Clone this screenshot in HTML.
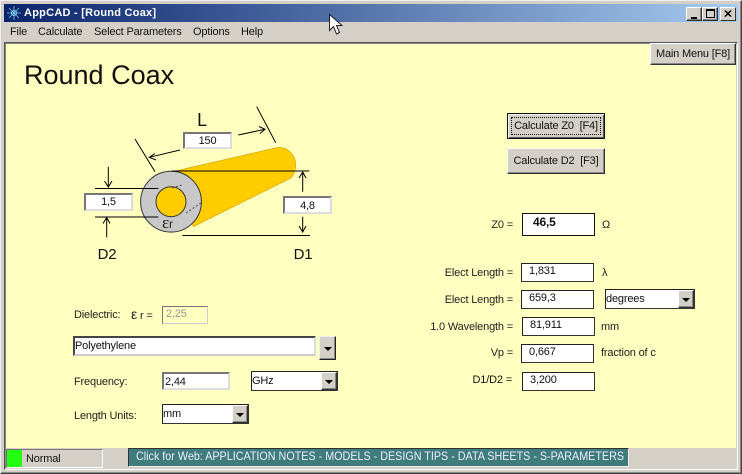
<!DOCTYPE html>
<html><head><meta charset="utf-8">
<style>
html,body{margin:0;padding:0;width:742px;height:474px;overflow:hidden;background:#d4d0c8;font-family:"Liberation Sans",sans-serif;font-size:11px;color:#111;letter-spacing:-.17px}
.a{position:absolute;box-sizing:border-box;white-space:nowrap}
.box{background:#fff;border:1px solid #222;border-right-color:#333;border-bottom-color:#333}
.sunk{background:#fff;border:2px solid;border-color:#777 #ddd #ddd #777}
.btn3{background:#d4d0c8;border:1px solid;border-color:#fff #333 #333 #fff;box-shadow:inset -1px -1px 0 #888}
.lab{color:#222}
.r{text-align:right}
.c{text-align:center}
.tri{position:absolute;left:50%;top:50%;margin:-1px 0 0 -4px;width:0;height:0;border:4px solid transparent;border-top:4px solid #000;border-bottom:0}
</style></head><body>
<!-- frame -->
<div class="a" style="left:0;top:0;width:742px;height:474px;border:1px solid #eee;border-right-color:#444;border-bottom-color:#444;box-shadow:inset -1px -1px 0 #888"></div>
<!-- title -->
<div class="a" style="left:4px;top:4px;width:734px;height:18px;background:linear-gradient(90deg,#0a246a,#a6caf0)"></div>
<svg class="a" style="left:6px;top:5px" width="16" height="16" viewBox="0 0 16 16" stroke="#6cc8f0" stroke-width=".8" fill="none"><path d="M8 1V15M1 8H15M3 3L13 13M13 3L3 13"/><circle cx="8" cy="8" r="2.5" stroke="#a8e4ff"/></svg>
<div class="a" style="left:24px;top:5px;color:#fff;font-weight:bold;font-size:11px;line-height:16px;letter-spacing:.25px">AppCAD - [Round Coax]</div>
<div class="a btn3 c" style="left:686px;top:7px;width:16px;height:14px"><div class="a" style="left:4px;top:9px;width:6px;height:2px;background:#000"></div></div>
<div class="a btn3" style="left:702px;top:7px;width:16px;height:14px"><div class="a" style="left:3px;top:1px;width:9px;height:9px;border:1px solid #000;border-top-width:2px"></div></div>
<svg class="a" style="left:720px;top:7px;background:#d4d0c8;border:1px solid;border-color:#fff #333 #333 #fff" width="16" height="14" viewBox="0 0 16 14"><path d="M4 3L11 10M5 3L12 10M11 3L4 10M12 3L5 10" stroke="#000"/></svg>
<!-- menu -->
<div class="a" style="left:10px;top:25px;line-height:14px;color:#111">File</div>
<div class="a" style="left:38px;top:25px;line-height:14px;color:#111">Calculate</div>
<div class="a" style="left:94px;top:25px;line-height:14px;color:#111">Select Parameters</div>
<div class="a" style="left:193px;top:25px;line-height:14px;color:#111">Options</div>
<div class="a" style="left:241px;top:25px;line-height:14px;color:#111">Help</div>
<!-- client -->
<div class="a" style="left:4px;top:42px;width:734px;height:428px;border:1px solid;border-color:#555 #fff #fff #555;box-shadow:inset 1px 1px 0 #888"></div>
<div class="a" style="left:6px;top:44px;width:730px;height:404px;background:#ffffc0"></div>
<div class="a c btn3" style="left:650px;top:43px;width:86px;height:22px;line-height:20px;color:#111">Main Menu [F8]</div>
<div class="a" style="left:24px;top:59px;font-size:27px;line-height:32px;color:#111;letter-spacing:0">Round Coax</div>
<!-- diagram -->
<svg class="a" style="left:0;top:0" width="742" height="474" viewBox="0 0 742 474" fill="none" stroke="#000" stroke-width="1">
<path d="M176.7 170.7L276.7 147.7C287 146 296 155 295.7 165C295.7 171 293 176 291 178L193.3 226.7Z" fill="#ffcc00" stroke="#c8a000" stroke-width=".6"/>
<circle cx="171" cy="201.7" r="30.4" fill="#c8c8c8" stroke="#333"/>
<circle cx="171" cy="201.7" r="15" fill="#ffcc00" stroke="#333"/>
<path d="M171.7 171H309.3M182.3 235.5H310M95 188.5H158.3M95 217H158.3"/>
<path d="M135 139L155 171.7M256.7 106.7L275.7 142.7"/>
<path d="M238.3 135L265 129.3M259 126.5L265 129.3L260 133.5M180 150L149.3 157.3M155 153.5L149.3 157.3L156 160"/>
<path d="M302.7 191.7V172M299 178L302.7 172L306 178M302.7 216.7V231.7M299 226L302.7 232L306 226"/>
<path d="M108.3 166.7V187M104.5 181L108.3 187L112 181M106.7 237.3V217.5M103 223.5L106.7 217.5L110 223.5"/>
<path d="M172 188L182 185M186 213L201 203" stroke-dasharray="2 2" stroke="#444"/>
</svg>
<div class="a sunk c" style="left:183px;top:132px;width:49px;height:17px;line-height:15px;color:#111">150</div>
<div class="a sunk c" style="left:84px;top:193px;width:49px;height:18px;line-height:15px;color:#111">1,5</div>
<div class="a sunk c" style="left:283px;top:196px;width:49px;height:18px;line-height:16px;color:#111">4,8</div>
<div class="a c" style="left:186px;top:109px;width:32px;font-size:18px;line-height:22px">L</div>
<div class="a c" style="left:87px;top:246px;width:40px;font-size:15px;line-height:18px">D2</div>
<div class="a c" style="left:283px;top:246px;width:40px;font-size:15px;line-height:18px">D1</div>
<div class="a" style="left:162px;top:214px;font-size:17px;line-height:18px;color:#222;font-family:'Liberation Serif',serif">&#949;<span style="font-size:12px;font-family:'Liberation Sans',sans-serif">r</span></div>
<!-- left form -->
<div class="a lab" style="left:74px;top:308px;line-height:14px">Dielectric:</div>
<div class="a lab" style="left:131px;top:307px;line-height:14px"><span style="font-size:14px">&#949;</span> r =</div>
<div class="a" style="left:162px;top:306px;width:46px;height:18px;background:#ffffc0;border:1px solid;border-color:#777 #ccc #ccc #777;color:#999;line-height:15px;padding-left:3px">2,25</div>
<div class="a" style="left:73px;top:336px;width:243px;height:20px;background:#fff;border:2px solid;border-color:#444 #ddd #ccc #444;line-height:17px;padding-left:0;color:#111;font-size:11px">Polyethylene</div>
<div class="a btn3" style="left:319px;top:336px;width:17px;height:24px;border-color:#eee #222 #222 #eee"><span class="tri"></span></div>
<div class="a lab" style="left:74px;top:375px;line-height:14px">Frequency:</div>
<div class="a sunk" style="left:162px;top:372px;width:68px;height:18px;line-height:16px;padding-left:1px;font-size:11px;border-color:#777 #ddd #ddd #777">2,44</div>
<div class="a box" style="left:251px;top:371px;width:87px;height:20px;line-height:19px;padding-left:0">GHz</div>
<div class="a btn3" style="left:321px;top:372px;width:16px;height:18px"><span class="tri"></span></div>
<div class="a lab" style="left:74px;top:409px;line-height:14px">Length Units:</div>
<div class="a box" style="left:162px;top:404px;width:87px;height:20px;line-height:19px;padding-left:0">mm</div>
<div class="a btn3" style="left:232px;top:405px;width:16px;height:18px"><span class="tri"></span></div>
<!-- buttons -->
<div class="a c" style="left:507px;top:113px;width:98px;height:26px;background:#d4d0c8;border:1px solid #111;box-shadow:inset 1px 1px 0 #fff,inset -1px -1px 0 #555;line-height:24px;color:#111"><div class="a" style="left:3px;top:3px;width:90px;height:18px;border:1px dotted #111"></div>Calculate Z0 &nbsp;[F4]</div>
<div class="a c btn3" style="left:507px;top:148px;width:98px;height:26px;line-height:24px;color:#111">Calculate D2 &nbsp;[F3]</div>
<!-- right results -->
<div class="a lab r" style="left:420px;top:218px;width:93px;line-height:14px">Z0 =</div>
<div class="a box" style="left:522px;top:213px;width:73px;height:23px;font-weight:bold;font-size:12px;line-height:17px;padding-left:10px;border-color:#111">46,5</div>
<div class="a lab" style="left:602px;top:218px;line-height:14px">&#937;</div>
<div class="a lab r" style="left:420px;top:266px;width:93px;line-height:14px">Elect Length =</div>
<div class="a box" style="left:521px;top:263px;width:73px;height:19px;line-height:15px;padding-left:7px">1,831</div>
<div class="a lab" style="left:602px;top:266px;line-height:14px">&#955;</div>
<div class="a lab r" style="left:420px;top:293px;width:93px;line-height:14px">Elect Length =</div>
<div class="a box" style="left:521px;top:290px;width:73px;height:19px;line-height:15px;padding-left:7px">659,3</div>
<div class="a box" style="left:605px;top:289px;width:90px;height:20px;line-height:19px;padding-left:0">degrees</div>
<div class="a btn3" style="left:678px;top:290px;width:16px;height:18px"><span class="tri"></span></div>
<div class="a lab r" style="left:410px;top:320px;width:103px;line-height:14px">1.0 Wavelength =</div>
<div class="a box" style="left:522px;top:317px;width:73px;height:19px;line-height:15px;padding-left:7px">81,911</div>
<div class="a lab" style="left:601px;top:320px;line-height:14px">mm</div>
<div class="a lab r" style="left:420px;top:346px;width:93px;line-height:14px">Vp =</div>
<div class="a box" style="left:521px;top:344px;width:73px;height:19px;line-height:15px;padding-left:7px">0,667</div>
<div class="a lab" style="left:601px;top:346px;line-height:14px">fraction of c</div>
<div class="a r" style="left:420px;top:373px;width:92px;line-height:14px">D1/D2 =</div>
<div class="a box" style="left:522px;top:372px;width:73px;height:19px;line-height:15px;padding-left:7px">3,200</div>
<!-- status -->
<div class="a" style="left:6px;top:449px;width:97px;height:19px;border:1px solid;border-color:#777 #fff #fff #777;background:#d4d0c8"></div>
<div class="a" style="left:7px;top:450px;width:15px;height:17px;background:#22ff11"></div>
<div class="a" style="left:26px;top:452px;line-height:14px;color:#111">Normal</div>
<div class="a" style="left:128px;top:448px;width:501px;height:19px;background:#3f7c7c;border:1px solid;border-color:#333 #eee #eee #333"></div>
<div class="a" style="left:136px;top:449px;color:#eef;line-height:15px;font-size:12px;letter-spacing:0;transform:scaleX(.897);transform-origin:left top">Click for Web: APPLICATION NOTES - MODELS - DESIGN TIPS - DATA SHEETS - S-PARAMETERS</div>
<!-- cursor -->
<svg class="a" style="left:328px;top:13px" width="16" height="24" viewBox="0 0 16 24"><path d="M1.5 1.5V17.5L5.5 13.5L8.5 21L11.5 19.5L8.5 12.5H14Z" fill="#fff" stroke="#222" stroke-width="1"/></svg>
</body></html>
